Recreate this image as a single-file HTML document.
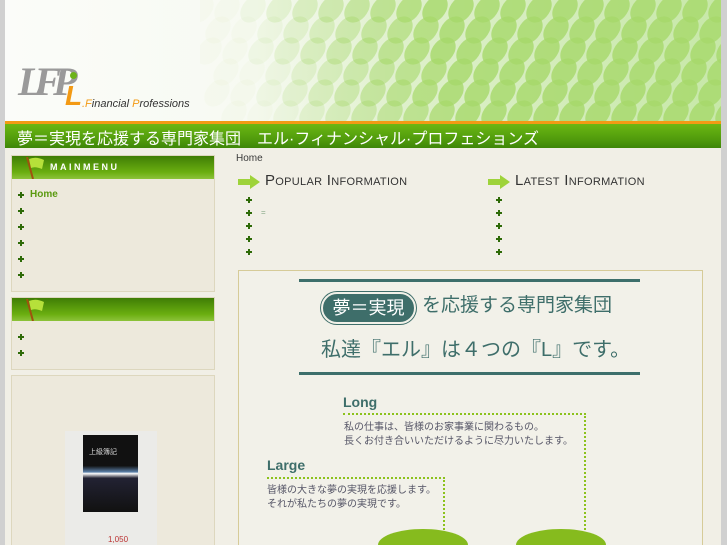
<!DOCTYPE html>
<html><head><meta charset="utf-8"><style>
*{margin:0;padding:0;box-sizing:border-box}
html,body{width:727px;height:545px;overflow:hidden}
body{background:#d0d0d0;font-family:"Liberation Sans","Noto Sans CJK JP",sans-serif}
#wrap{position:relative;width:727px;height:545px;overflow:hidden}
.a{position:absolute}
#page{left:5px;top:0;width:716px;height:545px;background:#f1efe6}
#hdr{left:5px;top:0;width:716px;height:121px;background:linear-gradient(90deg,#fbfcf9 0%,#f7faf2 35%,#dff0cc 55%,#c7e8a8 100%)}
.leaf{position:absolute;width:22px;height:30px;border-radius:60% 40% 60% 40%;background:#a6d86a;transform:rotate(25deg)}
#bar{left:5px;top:121px;width:716px;height:27px;background:linear-gradient(#f39a14 0,#f39a14 3px,#6cb713 3px,#4f9a0c 70%,#3e8608 100%);color:#fff;font-size:16px;padding:4px 0 0 12px;white-space:nowrap}
.box{position:absolute;left:11px;width:204px;background:#ede9dc;border:1px solid #ddd7be}
.bh{height:23px;background:linear-gradient(#3f7d05,#6aae10 70%,#8cc33a);position:relative;color:#fff;font-size:9px;font-weight:bold;letter-spacing:2.5px;padding:6px 0 0 38px}
.flag{position:absolute;left:12px;top:1px;width:22px;height:22px}
.bul{position:absolute;width:6px;height:6px}
.bul:before,.bul:after{content:"";position:absolute;background:#2e6a07}
.bul:before{left:2px;top:0;width:2px;height:6px}.bul:after{left:0;top:2px;width:6px;height:2px}
.t{font-size:11px;color:#3a3a3a}
.arr{position:absolute;width:22px;height:14px}
.h2{position:absolute;font-size:15px;color:#333;font-variant:small-caps;letter-spacing:.3px}
.jp{color:#556;font-size:10px;line-height:14px}
</style></head><body><div id="wrap">
<div class="a" id="page"></div>
<div class="a" id="hdr"></div>
<div class="a" style="left:200px;top:0;width:521px;height:121px;overflow:hidden" id="lv"></div>
<div class="a" style="left:18px;top:58px;font-size:40px;font-style:italic;font-weight:bold;color:#9a9a9a;letter-spacing:-8px;font-family:'Liberation Serif',serif;line-height:48px">LFP</div>
<div class="a" style="left:70px;top:72px;width:7px;height:7px;background:#6cb31a;border-radius:50%"></div>
<div class="a" style="left:65px;top:82px;font-size:28px;font-style:italic;font-weight:bold;color:#f39a14;line-height:28px">L</div>
<div class="a" style="left:82px;top:98px;font-size:11px;font-style:italic;color:#333;white-space:nowrap"><span style="color:#f39a14">.F</span>inancial <span style="color:#f39a14">P</span>rofessions</div>
<div class="a" id="bar">夢＝実現を応援する専門家集団　エル·フィナンシャル·プロフェションズ</div>

<div class="box" style="top:155px;height:137px"><div class="bh">MAINMENU<svg class="flag" viewBox="0 0 22 22"><path d="M3 0 L9 22" stroke="#a0520e" stroke-width="2"/><path d="M5 2 Q12 -1 20 3 L18 12 Q11 9 7 11Z" fill="#b6e03a"/></svg></div></div>
<div class="box" style="top:297px;height:73px"><div class="bh"><svg class="flag" viewBox="0 0 22 22"><path d="M3 0 L9 22" stroke="#a0520e" stroke-width="2"/><path d="M5 2 Q12 -1 20 3 L18 12 Q11 9 7 11Z" fill="#b6e03a"/></svg></div></div>
<div class="box" style="top:375px;height:170px;border-bottom:none"></div>
<div class="a" style="left:65px;top:431px;width:92px;height:114px;background:#ebebe8"></div>
<div class="a" style="left:83px;top:435px;width:55px;height:77px;background:linear-gradient(#111 0,#111 40%,#5a7fa8 48%,#fff 50%,#223 56%,#111 100%);color:#ddd;font-size:7px;padding:12px 0 0 6px;font-family:'Liberation Serif',serif">上級簿記</div>
<div class="a" style="left:108px;top:535px;font-size:8px;color:#b33;line-height:10px">1,050</div>
<div class="bul" style="left:18px;top:192px"></div><div class="a" style="left:30px;top:189px;font-size:10px;font-weight:bold;color:#5a9a10">Home</div>
<div class="bul" style="left:18px;top:208px"></div><div class="bul" style="left:18px;top:224px"></div><div class="bul" style="left:18px;top:240px"></div><div class="bul" style="left:18px;top:256px"></div><div class="bul" style="left:18px;top:272px"></div>
<div class="bul" style="left:18px;top:334px"></div><div class="bul" style="left:18px;top:350px"></div>

<div class="a t" style="left:236px;top:153px;font-size:10px">Home</div>
<svg class="arr" style="left:238px;top:175px" viewBox="0 0 22 14"><path d="M0 4 H12 V0 L22 7 L12 14 V10 H0Z" fill="#9ed33a"/></svg>
<div class="h2" style="left:265px;top:172px">Popular Information</div>
<svg class="arr" style="left:488px;top:175px" viewBox="0 0 22 14"><path d="M0 4 H12 V0 L22 7 L12 14 V10 H0Z" fill="#9ed33a"/></svg>
<div class="h2" style="left:515px;top:172px">Latest Information</div>
<div class="bul" style="left:246px;top:197px"></div><div class="bul" style="left:246px;top:210px"></div><div class="bul" style="left:246px;top:223px"></div><div class="bul" style="left:246px;top:236px"></div><div class="bul" style="left:246px;top:249px"></div>
<div class="a" style="left:261px;top:208px;font-size:8px;color:#8a8">=</div>
<div class="bul" style="left:496px;top:197px"></div><div class="bul" style="left:496px;top:210px"></div><div class="bul" style="left:496px;top:223px"></div><div class="bul" style="left:496px;top:236px"></div><div class="bul" style="left:496px;top:249px"></div>

<div class="a" style="left:238px;top:270px;width:465px;height:275px;border:1px solid #d6cb98;border-bottom:none;background:#f2f1e9"></div>
<div class="a" style="left:299px;top:279px;width:341px;height:3px;background:#3d6f6b"></div>
<div class="a" style="left:299px;top:372px;width:341px;height:3px;background:#3d6f6b"></div>
<div class="a" style="left:321px;top:292px;width:95px;height:32px;border-radius:16px;background:#3e6e6a;border:2px solid #f2f1e9;box-shadow:0 0 0 1px #3e6e6a;color:#fff;font-size:18px;text-align:center;line-height:28px">夢＝実現</div>
<div class="a" style="left:422px;top:293px;font-size:19px;color:#3e6e6a;line-height:26px">を応援する専門家集団</div>
<div class="a" style="left:321px;top:336px;font-size:20px;color:#3e6e6a;line-height:28px;white-space:nowrap">私達『エル』は４つの『L』です。</div>
<div class="a" style="left:343px;top:394px;font-size:14px;font-weight:bold;color:#3e6e6a">Long</div>
<div class="a" style="left:343px;top:413px;width:243px;height:132px;border-top:2px dotted #8cc21c;border-right:2px dotted #8cc21c"></div>
<div class="a jp" style="left:344px;top:421px">私の仕事は、皆様のお家事業に関わるもの。<br>長くお付き合いいただけるように尽力いたします。</div>
<div class="a" style="left:267px;top:457px;font-size:14px;font-weight:bold;color:#3e6e6a">Large</div>
<div class="a" style="left:267px;top:477px;width:178px;height:68px;border-top:2px dotted #8cc21c;border-right:2px dotted #8cc21c"></div>
<div class="a jp" style="left:267px;top:484px">皆様の大きな夢の実現を応援します。<br>それが私たちの夢の実現です。</div>
<div class="a" style="left:378px;top:529px;width:90px;height:16px;border-radius:45px 45px 0 0/16px 16px 0 0;background:#86bb1e"></div>
<div class="a" style="left:516px;top:529px;width:90px;height:16px;border-radius:45px 45px 0 0/16px 16px 0 0;background:#86bb1e"></div>
<script>
var c=document.getElementById('lv'),h='';
for(var r=0;r<6;r++)for(var i=0;i<21;i++){var x=i*26+(r%2)*13-10+r*4,y=r*21-6;var o=Math.max(0.05,Math.min(1,(i-1)/8));h+='<div class="leaf" style="left:'+x+'px;top:'+y+'px;opacity:'+(o*0.8)+'"></div>';}
c.innerHTML=h;
</script>
</div></body></html>
